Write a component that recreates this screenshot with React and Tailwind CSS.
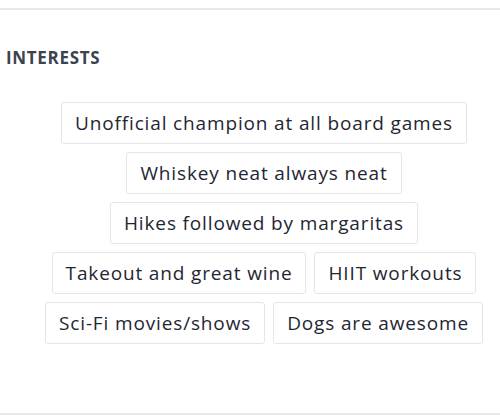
const interests = [
  "Unofficial champion at all board games",
  "Whiskey neat always neat",
  "Hikes followed by margaritas",
  "Takeout and great wine",
  "HIIT workouts",
  "Sci-Fi movies/shows",
  "Dogs are awesome",
];

export default function App() {
  return (
    <div className="w-[500px] h-[420px] bg-white font-['Open_Sans',sans-serif]">
      <div className="h-[8px]" />
      <div className="border-t-2 border-[#e8e9eb]">
        <h2 className="pl-[6px] pt-[36px] h-[92px] text-[17px] leading-[24px] font-bold tracking-[0.04em] text-[#3c4350]">
          INTERESTS
        </h2>
        <div className="pl-[28px] flex flex-wrap justify-center gap-2 h-[311px] content-start">
          {interests.map((item) => (
            <span
              key={item}
              className="h-[42px] flex items-center px-[13px] border border-[#e3e5e8] rounded-[3px] text-[19px] tracking-[0.045em] text-[#1f2633]"
            >
              {item}
            </span>
          ))}
        </div>
        <div className="border-t-2 border-[#e8e9eb]" />
      </div>
    </div>
  );
}
